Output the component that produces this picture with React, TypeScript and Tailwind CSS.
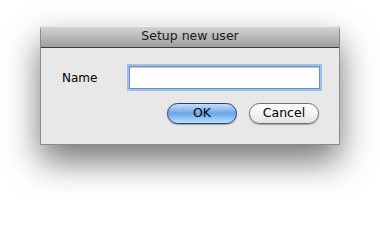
export default function App() {
  return (
    <div className="w-[380px] h-[200px] bg-white flex justify-center pt-[26px] font-['DejaVu_Sans',sans-serif] text-[12px] text-black">
      <div className="w-[300px] h-[119px] flex flex-col bg-[#e8e8e8] border border-t-0 border-[#8a8a8a] rounded-t-[4px] shadow-[0_16px_34px_rgba(0,0,0,0.55)]">
        <div className="h-[22px] flex items-center justify-center rounded-t-[4px] border-b border-[#3c3c3c] bg-gradient-to-b from-[#d6d6d6] to-[#9e9e9e] shadow-[inset_0_1px_0_#ececec] text-[12.5px] text-[#1a1a1a]">
          Setup new user
        </div>
        <div className="flex-1 flex flex-col pl-[21px] pr-[19px] pt-[18px]">
          <div className="flex items-center">
            <label className="w-[67px]">Name</label>
            <input
              type="text"
              className="w-[191px] h-[23px] bg-white border border-[#6f8fc8] outline-none shadow-[0_0_0_2px_#9ec0ea,inset_0_1px_1px_rgba(0,0,0,0.25)] px-1"
            />
          </div>
          <div className="flex justify-end gap-[12px] mt-[14px] pr-px">
            <button className="w-[70px] h-[21px] rounded-full border border-[#2b3f7a] bg-gradient-to-b from-[#c6dcf6] via-[#6ba6ea] to-[#b9e2fb] shadow-[0_1px_1px_rgba(0,0,0,0.3)] text-[12.5px] leading-none">
              OK
            </button>
            <button className="w-[70px] h-[21px] rounded-full border border-[#707070] bg-gradient-to-b from-white via-[#f4f4f4] to-[#e2e2e2] shadow-[0_1px_1px_rgba(0,0,0,0.3)] text-[12.5px] leading-none">
              Cancel
            </button>
          </div>
        </div>
      </div>
    </div>
  );
}
